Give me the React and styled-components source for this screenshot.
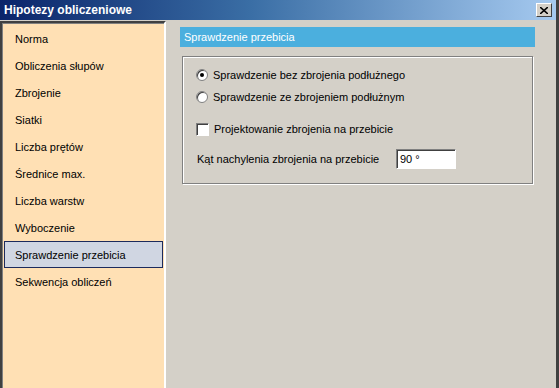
import styled, { createGlobalStyle } from 'styled-components';

const GlobalStyle = createGlobalStyle`
  html, body { margin: 0; padding: 0; background: #D4D0C8; }
  * { box-sizing: border-box; }
`;

const Window = styled.div`
  width: 559px;
  height: 388px;
  display: flex;
  flex-direction: column;
  background: #D4D0C8;
  border-right: 3px solid #404040;
  overflow: hidden;
  font-family: "Liberation Sans", Arial, sans-serif;
  font-size: 11px;
  color: #000;
`;

const TitleBar = styled.div`
  height: 20px;
  display: flex;
  align-items: center;
  justify-content: space-between;
  padding: 0 4px 0 4px;
  background: linear-gradient(to right, #0A246A 0%, #3A6EA5 45%, #A6CAF0 100%);
`;

const Title = styled.span`
  color: #fff;
  font-weight: bold;
  font-size: 12px;
`;

const CloseButton = styled.div`
  width: 16px;
  height: 14px;
  background: #D4D0C8;
  border: 1px solid;
  border-color: #fff #404040 #404040 #fff;
  display: flex;
  align-items: center;
  justify-content: center;
`;

const Body = styled.div`
  flex: 1;
  display: flex;
  padding-top: 1px;
  min-height: 0;
`;

const Sidebar = styled.ul`
  list-style: none;
  margin: 0;
  padding: 2px 0 0 2px;
  width: 166px;
  background: #FFE0B4;
  border-left: 2px solid #404040;
  border-top: 2px solid #404040;
  border-right: 2px solid #fff;
  box-shadow: inset 1px 1px 0 #808080;
`;

const Item = styled.li`
  height: 27px;
  display: flex;
  align-items: center;
  padding-left: 10px;
  margin-right: 1px;
  border: 1px solid ${p => (p.$active ? '#1C2A5C' : 'transparent')};
  background: ${p => (p.$active ? '#D0D6E2' : 'transparent')};
  white-space: nowrap;
`;

const Content = styled.div`
  flex: 1;
  padding: 6px 21px 0 14px;
`;

const Header = styled.div`
  height: 20px;
  display: flex;
  align-items: center;
  padding-left: 4px;
  background: #4BAFDE;
  color: #fff;
  font-size: 11px;
`;

const Group = styled.div`
  margin: 9px 2px 0 2px;
  height: 128px;
  border: 1px solid #808080;
  box-shadow: inset 1px 1px 0 #fff, 1px 1px 0 #fff;
  padding: 7px 0 0 13px;
  display: flex;
  flex-direction: column;
`;

const Option = styled.label`
  height: 22px;
  display: flex;
  align-items: center;
  gap: 5px;
`;

const Spacer = styled.div`
  height: ${p => p.$h}px;
`;

const RadioCircle = styled.span`
  width: 12px;
  height: 12px;
  border-radius: 50%;
  background: #fff;
  border: 1px solid #808080;
  box-shadow: inset 1px 1px 0 #404040;
  display: flex;
  align-items: center;
  justify-content: center;
  &::after {
    content: '';
    width: 4px;
    height: 4px;
    border-radius: 50%;
    background: ${p => (p.$checked ? '#000' : 'transparent')};
  }
`;

const CheckBox = styled.span`
  width: 13px;
  height: 13px;
  background: #fff;
  border: 1px solid;
  border-color: #808080 #fff #fff #808080;
  box-shadow: inset 1px 1px 0 #404040;
`;

const FieldRow = styled.div`
  height: 26px;
  display: flex;
  align-items: center;
  padding-left: 1px;
`;

const FieldLabel = styled.span`
  width: 199px;
  white-space: nowrap;
`;

const TextInput = styled.div`
  width: 60px;
  height: 20px;
  background: #fff;
  border: 1px solid;
  border-color: #808080 #fff #fff #808080;
  box-shadow: inset 1px 1px 0 #404040;
  padding: 3px 0 0 3px;
`;

const items = [
  'Norma',
  'Obliczenia słupów',
  'Zbrojenie',
  'Siatki',
  'Liczba prętów',
  'Średnice max.',
  'Liczba warstw',
  'Wyboczenie',
  'Sprawdzenie przebicia',
  'Sekwencja obliczeń',
];

export default function App() {
  return (
    <>
      <GlobalStyle />
      <Window>
        <TitleBar>
          <Title>Hipotezy obliczeniowe</Title>
          <CloseButton>
            <svg width="8" height="7" viewBox="0 0 8 7">
              <path d="M0 0 L8 7 M8 0 L0 7" stroke="#000" strokeWidth="1.6" />
            </svg>
          </CloseButton>
        </TitleBar>
        <Body>
          <Sidebar>
            {items.map(name => (
              <Item key={name} $active={name === 'Sprawdzenie przebicia'}>{name}</Item>
            ))}
          </Sidebar>
          <Content>
            <Header>Sprawdzenie przebicia</Header>
            <Group>
              <Option><RadioCircle $checked />Sprawdzenie bez zbrojenia podłużnego</Option>
              <Option><RadioCircle />Sprawdzenie ze zbrojeniem podłużnym</Option>
              <Spacer $h={10} />
              <Option><CheckBox />Projektowanie zbrojenia na przebicie</Option>
              <Spacer $h={6} />
              <FieldRow>
                <FieldLabel>Kąt nachylenia zbrojenia na przebicie</FieldLabel>
                <TextInput>90 °</TextInput>
              </FieldRow>
            </Group>
          </Content>
        </Body>
      </Window>
    </>
  );
}
